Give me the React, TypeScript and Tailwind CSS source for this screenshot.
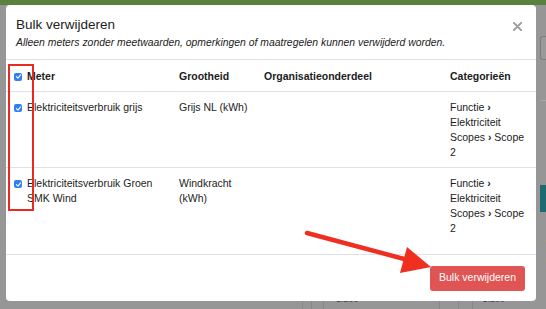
import React from "react";

const rows = [
  {
    meter: "Elektriciteitsverbruik grijs",
    grootheid: "Grijs NL (kWh)",
  },
  {
    meter: "Elektriciteitsverbruik Groen SMK Wind",
    grootheid: "Windkracht (kWh)",
  },
];

function Check() {
  return (
    <span className="mt-[4px] flex h-[8px] w-[8px] shrink-0 items-center justify-center rounded-[2px] bg-[#2f80f6]">
      <svg viewBox="0 0 10 10" className="h-[7px] w-[7px]">
        <path d="M2 5.2 L4.2 7.3 L8 2.8" fill="none" stroke="white" strokeWidth="1.6" strokeLinecap="round" strokeLinejoin="round" />
      </svg>
    </span>
  );
}

function Categories() {
  return (
    <div>
      <div>Functie <span className="font-bold">›</span></div>
      <div>Elektriciteit</div>
      <div>Scopes <span className="font-bold">›</span> Scope</div>
      <div>2</div>
    </div>
  );
}

export default function App() {
  return (
    <div
      className="relative h-[309px] w-[546px] overflow-hidden bg-[#969696] text-[#1c1c1c]"
      style={{ fontFamily: '"Liberation Sans", Arial, sans-serif' }}
    >
      {/* dimmed page behind the modal */}
      <div className="flex h-full flex-col">
        <div className="h-[5px] bg-[#5b813f]" />
        <div className="flex flex-1">
          <div className="flex-1" />
          <div className="flex w-[6px] flex-col">
            <div className="mt-[31px] h-[24px] rounded-l-[3px] border border-r-0 border-[#7d7d7d] bg-[#9a9a9a]" />
            <div className="mt-[40px] h-px bg-[#a8a8a8]" />
            <div className="mt-[84px] h-[27px] bg-[#1e6a73]" />
            <div className="mt-[28px] h-px bg-[#a89878]" />
            <div className="mt-[19px] h-px bg-[#a89878]" />
          </div>
        </div>
        <div className="flex h-[18px] items-center text-[9px] text-[#444]">
          <div className="w-[302px]" />
          <div className="h-full w-[10px] border-x border-[#888]" />
          <div className="ml-[11px] h-full border-l border-[#888]" />
          <div className="ml-[12px]">1.200</div>
          <div className="ml-[80px] h-full w-[20px] border-x border-[#888]" />
          <div className="ml-[13px] h-full border-l border-[#888]" />
          <div className="ml-[10px]">1.200</div>
        </div>
      </div>

      {/* modal */}
      <div className="absolute left-[6px] top-[5px] flex h-[296px] w-[530px] flex-col rounded-[4px] bg-white">
        <div className="relative h-[55px] border-b border-[#dfe1e6] px-[10px] pt-[11px]">
          <div className="text-[13.5px] leading-[18px] text-[#222]">Bulk verwijderen</div>
          <div className="mt-[1px] text-[10.4px] italic leading-[15px] text-[#222]">
            Alleen meters zonder meetwaarden, opmerkingen of maatregelen kunnen verwijderd worden.
          </div>
          <svg viewBox="0 0 10 10" className="absolute right-[14px] top-[17px] h-[9px] w-[9px]">
            <path d="M1 1 L9 9 M9 1 L1 9" stroke="#9a9a9a" strokeWidth="2.2" strokeLinecap="round" />
          </svg>
        </div>

        <div className="grid grid-cols-[165px_85px_186px_1fr] text-[10.5px] leading-[15px]">
          <div className="flex h-[32px] items-center gap-[5px] border-b border-[#dfe1e6] pl-[8px] pt-[2px] font-bold">
            <span className="-mt-[4px]"><Check /></span>
            Meter
          </div>
          <div className="flex h-[32px] items-center border-b border-[#dfe1e6] pl-[8px] pt-[2px] font-bold">Grootheid</div>
          <div className="flex h-[32px] items-center border-b border-[#dfe1e6] pl-[8px] pt-[2px] font-bold">Organisatieonderdeel</div>
          <div className="flex h-[32px] items-center border-b border-[#dfe1e6] pl-[8px] pt-[2px] font-bold">Categorieën</div>

          {rows.map((r, i) => (
            <React.Fragment key={r.meter}>
              <div className={`flex gap-[5px] pl-[8px] pr-[4px] pt-[8px] ${i === 0 ? "h-[76px] border-b border-[#dfe1e6]" : ""}`}>
                <Check />
                <span>{r.meter}</span>
              </div>
              <div className={`pl-[8px] pr-[2px] pt-[8px] ${i === 0 ? "border-b border-[#dfe1e6]" : ""}`}>{r.grootheid}</div>
              <div className={`pl-[8px] pt-[8px] ${i === 0 ? "border-b border-[#dfe1e6]" : ""}`} />
              <div className={`pl-[8px] pr-[4px] pt-[8px] ${i === 0 ? "border-b border-[#dfe1e6]" : ""}`}>
                <Categories />
              </div>
            </React.Fragment>
          ))}
        </div>

        <div className="mt-auto flex h-[47px] items-center justify-end border-t border-[#dfe1e6] px-[11px]">
          <button className="h-[25px] rounded-[3px] bg-[#e05454] px-[9px] text-[10.5px] text-white">
            Bulk verwijderen
          </button>
        </div>
      </div>

      {/* annotations */}
      <div className="pointer-events-none absolute left-[8px] top-[64px] h-[147px] w-[26px] border-2 border-[#ea2a1e]" />
      <svg className="pointer-events-none absolute left-0 top-0" width="546" height="309">
        <line x1="307" y1="233" x2="408" y2="260" stroke="#ef2f20" strokeWidth="4.5" strokeLinecap="round" />
        <polygon points="431,267 407,247 400,273" fill="#ef2f20" />
      </svg>
    </div>
  );
}
